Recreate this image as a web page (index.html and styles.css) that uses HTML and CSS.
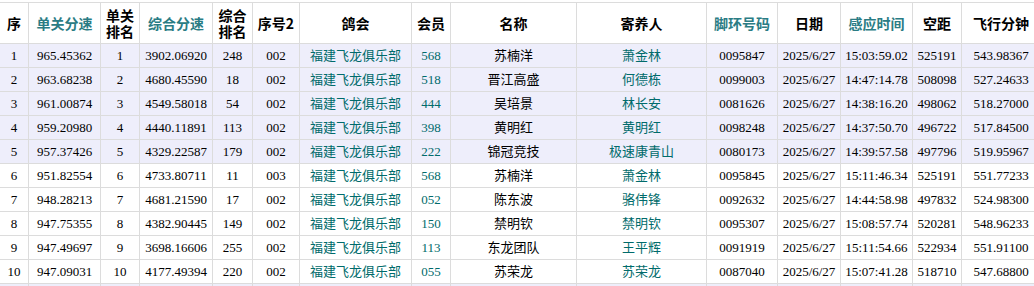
FILE: index.html
```html
<!DOCTYPE html>
<html lang="zh-CN">
<head>
<meta charset="utf-8">
<title>成绩</title>
<link rel="stylesheet" href="styles.css">
</head>
<body>
<table class="grid">
  <colgroup>
    <col class="c1"><col class="c2"><col class="c3"><col class="c4"><col class="c5">
    <col class="c6"><col class="c7"><col class="c8"><col class="c9"><col class="c10">
    <col class="c11"><col class="c12"><col class="c13"><col class="c14"><col class="c15">
  </colgroup>
  <thead>
    <tr>
      <th>序</th><th class="link">单关分速</th><th><span class="two">单关<br>排名</span></th><th class="link">综合分速</th><th><span class="two">综合<br>排名</span></th>
      <th>序号2</th><th>鸽会</th><th>会员</th><th>名称</th><th>寄养人</th>
      <th class="link">脚环号码</th><th>日期</th><th class="link">感应时间</th><th>空距</th><th>飞行分钟</th>
    </tr>
  </thead>
  <tbody>
    <tr class="alt"><td>1</td><td>965.45362</td><td>1</td><td>3902.06920</td><td>248</td><td>002</td><td class="t">福建飞龙俱乐部</td><td class="t">568</td><td>苏楠洋</td><td class="t">萧金林</td><td>0095847</td><td>2025/6/27</td><td>15:03:59.02</td><td>525191</td><td>543.98367</td></tr>
    <tr class="alt"><td>2</td><td>963.68238</td><td>2</td><td>4680.45590</td><td>18</td><td>002</td><td class="t">福建飞龙俱乐部</td><td class="t">518</td><td>晋江高盛</td><td class="t">何德栋</td><td>0099003</td><td>2025/6/27</td><td>14:47:14.78</td><td>508098</td><td>527.24633</td></tr>
    <tr class="alt"><td>3</td><td>961.00874</td><td>3</td><td>4549.58018</td><td>54</td><td>002</td><td class="t">福建飞龙俱乐部</td><td class="t">444</td><td>吴培景</td><td class="t">林长安</td><td>0081626</td><td>2025/6/27</td><td>14:38:16.20</td><td>498062</td><td>518.27000</td></tr>
    <tr class="alt"><td>4</td><td>959.20980</td><td>4</td><td>4440.11891</td><td>113</td><td>002</td><td class="t">福建飞龙俱乐部</td><td class="t">398</td><td>黄明红</td><td class="t">黄明红</td><td>0098248</td><td>2025/6/27</td><td>14:37:50.70</td><td>496722</td><td>517.84500</td></tr>
    <tr class="alt"><td>5</td><td>957.37426</td><td>5</td><td>4329.22587</td><td>179</td><td>002</td><td class="t">福建飞龙俱乐部</td><td class="t">222</td><td>锦冠竞技</td><td class="t">极速康青山</td><td>0080173</td><td>2025/6/27</td><td>14:39:57.58</td><td>497796</td><td>519.95967</td></tr>
    <tr><td>6</td><td>951.82554</td><td>6</td><td>4733.80711</td><td>11</td><td>003</td><td class="t">福建飞龙俱乐部</td><td class="t">568</td><td>苏楠洋</td><td class="t">萧金林</td><td>0095845</td><td>2025/6/27</td><td>15:11:46.34</td><td>525191</td><td>551.77233</td></tr>
    <tr><td>7</td><td>948.28213</td><td>7</td><td>4681.21590</td><td>17</td><td>002</td><td class="t">福建飞龙俱乐部</td><td class="t">052</td><td>陈东波</td><td class="t">骆伟锋</td><td>0092632</td><td>2025/6/27</td><td>14:44:58.98</td><td>497832</td><td>524.98300</td></tr>
    <tr><td>8</td><td>947.75355</td><td>8</td><td>4382.90445</td><td>149</td><td>002</td><td class="t">福建飞龙俱乐部</td><td class="t">150</td><td>禁明钦</td><td class="t">禁明钦</td><td>0095307</td><td>2025/6/27</td><td>15:08:57.74</td><td>520281</td><td>548.96233</td></tr>
    <tr><td>9</td><td>947.49697</td><td>9</td><td>3698.16606</td><td>255</td><td>002</td><td class="t">福建飞龙俱乐部</td><td class="t">113</td><td>东龙团队</td><td class="t">王平辉</td><td>0091919</td><td>2025/6/27</td><td>15:11:54.66</td><td>522934</td><td>551.91100</td></tr>
    <tr><td>10</td><td>947.09031</td><td>10</td><td>4177.49394</td><td>220</td><td>002</td><td class="t">福建飞龙俱乐部</td><td class="t">055</td><td>苏荣龙</td><td class="t">苏荣龙</td><td>0087040</td><td>2025/6/27</td><td>15:07:41.28</td><td>518710</td><td>547.68800</td></tr>
    <tr class="alt"><td></td><td></td><td></td><td></td><td></td><td></td><td></td><td></td><td></td><td></td><td></td><td></td><td></td><td></td><td></td></tr>
  </tbody>
</table>
</body>
</html>
```

FILE: styles.css
```css
html, body {
  margin: 0;
  padding: 0;
  overflow: hidden;
  background: #ffffff;
}

.grid {
  margin: 2px 0 0 -1px;
  border-collapse: collapse;
  table-layout: fixed;
  width: 1041px;
  font-family: "Liberation Serif", "Noto Sans CJK SC", serif;
  font-size: 13px;
  color: #000000;
}

.c1 { width: 29px; }
.c2 { width: 72px; }
.c3 { width: 39px; }
.c4 { width: 73px; }
.c5 { width: 40px; }
.c6 { width: 47px; }
.c7 { width: 112px; }
.c8 { width: 39px; }
.c9 { width: 126px; }
.c10 { width: 130px; }
.c11 { width: 71px; }
.c12 { width: 63px; }
.c13 { width: 72px; }
.c14 { width: 49px; }
.c15 { width: 79px; }

.grid th,
.grid td {
  border: 1px solid #dcdcdc;
  padding: 0;
  text-align: center;
  white-space: nowrap;
  overflow: hidden;
}

.grid th {
  height: 40px;
  font-family: "Noto Sans CJK SC", "Liberation Sans", sans-serif;
  font-size: 14px;
  font-weight: bold;
  line-height: 18px;
  color: #000000;
  background: #ffffff;
}

.grid th .two {
  display: block;
  font-size: 14px;
  line-height: 16px;
}

.grid th.link {
  color: #2a7c84;
}

.grid td {
  height: 23px;
  line-height: 16px;
}

.grid tr.alt td {
  background: #eeeefb;
}

.grid td.t {
  color: #006b6b;
}
```
